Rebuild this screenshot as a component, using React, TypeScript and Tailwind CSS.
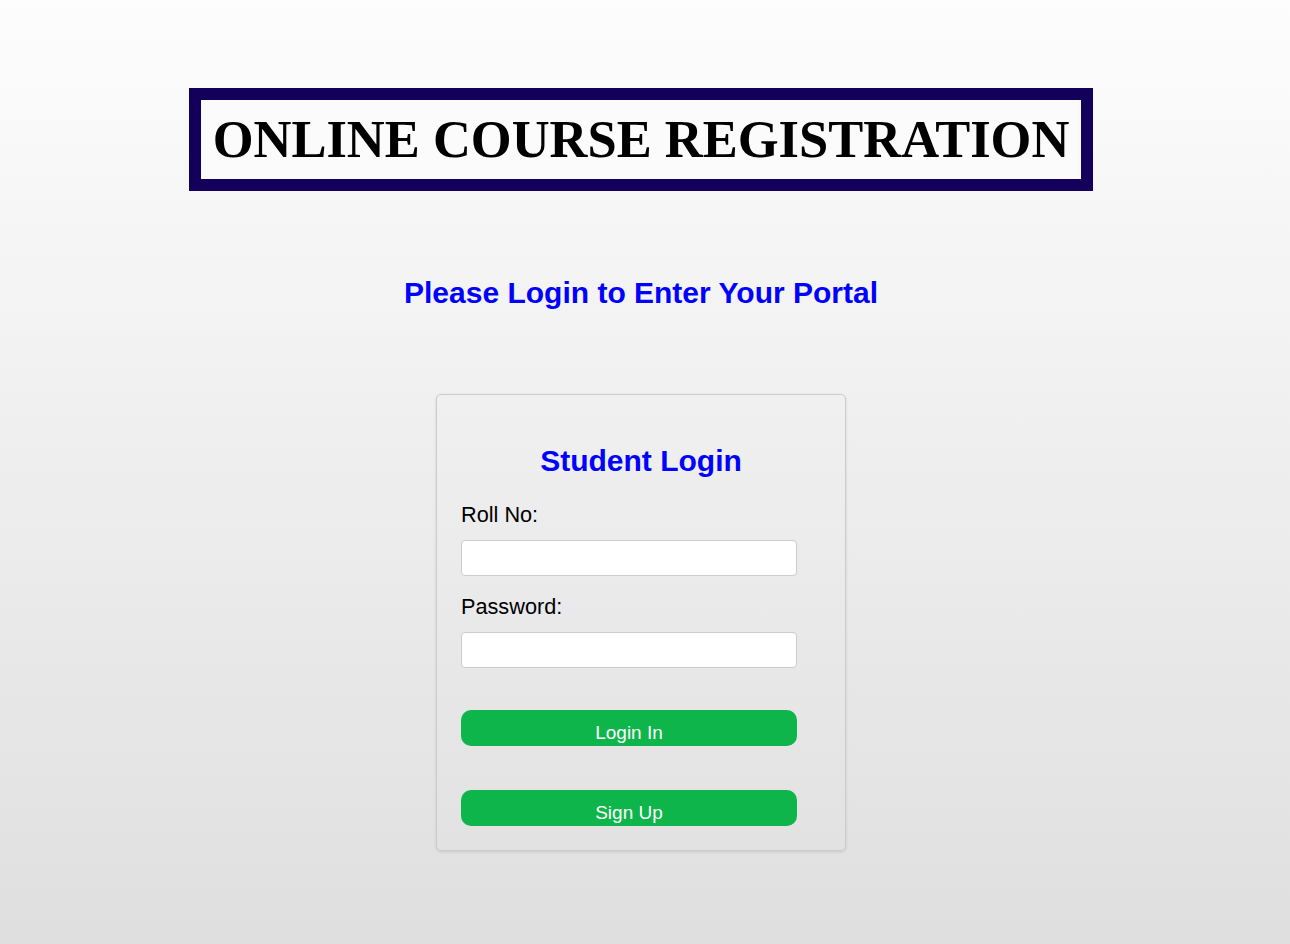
export default function App() {
  return (
    <div className="min-h-[944px] w-full bg-gradient-to-b from-[#fdfdfd] to-[#dfdfdf] pr-2 font-['Liberation_Sans',Arial,sans-serif]">
      <div className="flex flex-col items-center pt-[88px]">
        <div className="border-[12px] border-[#13005a] bg-[#fbfbfb] px-[12px] py-[10px]">
          <h1 className="font-['Liberation_Serif','Times_New_Roman',serif] text-[52.5px] font-bold leading-[59px] text-black">
            ONLINE COURSE REGISTRATION
          </h1>
        </div>

        <h2 className="mt-[85px] text-[30px] font-bold leading-[34px] text-[#0000ff]">
          Please Login to Enter Your Portal
        </h2>

        <div className="mt-[84px] w-[410px] rounded-[5px] border border-[#cccccc] px-6 pt-[49px] pb-[24px] shadow-[0_1px_3px_rgba(0,0,0,0.12)]">
          <h3 className="text-center text-[30px] font-bold leading-[34px] text-[#0000ff]">Student Login</h3>

          <form className="mt-[24px]">
            <label className="block text-[21.7px] leading-[26px] text-black">Roll No:</label>
            <input
              type="text"
              className="mt-[12px] block h-[36px] w-[336px] rounded-[4px] border border-[#cccccc] bg-white px-2 outline-none"
            />
            <label className="mt-[18px] block text-[21.7px] leading-[26px] text-black">Password:</label>
            <input
              type="password"
              className="mt-[12px] block h-[36px] w-[336px] rounded-[4px] border border-[#cccccc] bg-white px-2 outline-none"
            />
            <button
              type="button"
              className="mt-[42px] block h-[36px] w-[336px] rounded-[10px] bg-[#0db54b] pt-[10px] text-[19px] leading-[22px] text-white"
            >
              Login In
            </button>
            <button
              type="button"
              className="mt-[44px] block h-[36px] w-[336px] rounded-[10px] bg-[#0db54b] pt-[10px] text-[19px] leading-[22px] text-white"
            >
              Sign Up
            </button>
          </form>
        </div>
      </div>
    </div>
  );
}
